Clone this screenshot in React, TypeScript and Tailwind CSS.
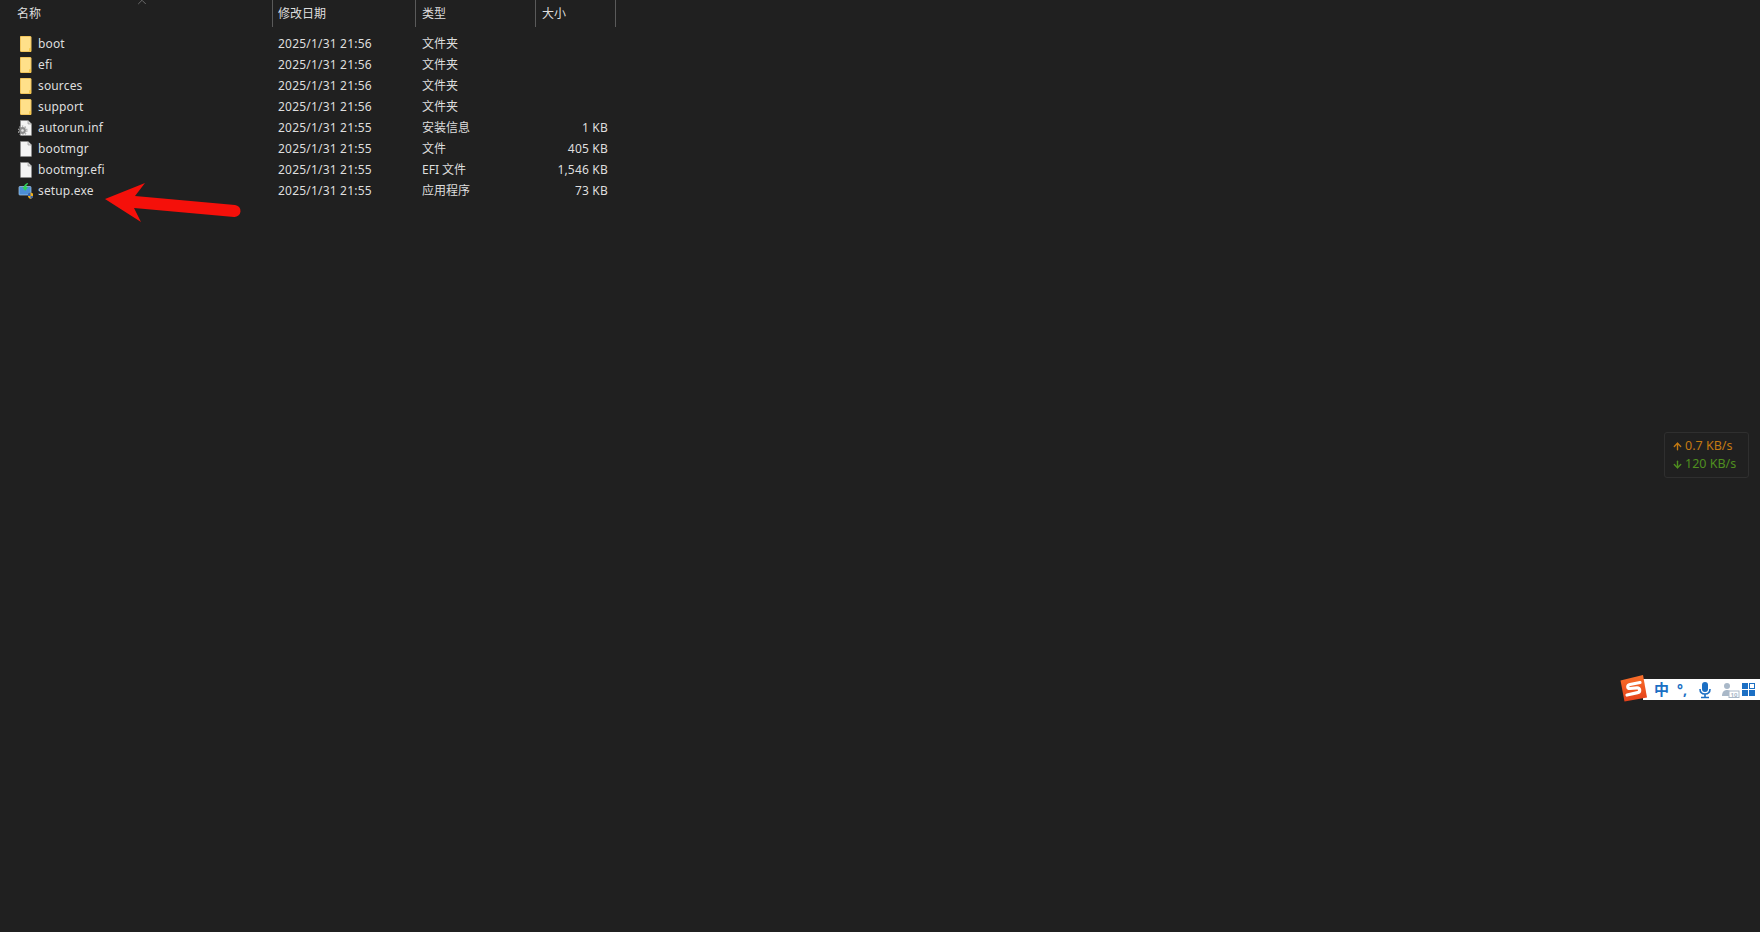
import { ArrowDown, ArrowUp, ChevronUp } from 'lucide-react';

type Row = {
  name: string;
  date: string;
  type: string;
  size?: string;
  icon: 'folder' | 'inf' | 'file' | 'exe';
};

const rows: Row[] = [
  { name: 'boot', date: '2025/1/31 21:56', type: '文件夹', icon: 'folder' },
  { name: 'efi', date: '2025/1/31 21:56', type: '文件夹', icon: 'folder' },
  { name: 'sources', date: '2025/1/31 21:56', type: '文件夹', icon: 'folder' },
  { name: 'support', date: '2025/1/31 21:56', type: '文件夹', icon: 'folder' },
  { name: 'autorun.inf', date: '2025/1/31 21:55', type: '安装信息', size: '1 KB', icon: 'inf' },
  { name: 'bootmgr', date: '2025/1/31 21:55', type: '文件', size: '405 KB', icon: 'file' },
  { name: 'bootmgr.efi', date: '2025/1/31 21:55', type: 'EFI 文件', size: '1,546 KB', icon: 'file' },
  { name: 'setup.exe', date: '2025/1/31 21:55', type: '应用程序', size: '73 KB', icon: 'exe' },
];

function FileIcon({ icon }: { icon: Row['icon'] }) {
  if (icon === 'folder') {
    return (
      <svg width="16" height="16" viewBox="0 0 16 16" className="shrink-0">
        <path d="M2.500 .5h10a.5.5 0 0 1 .5.5V15.500H3a.5.5 0 0 1-.5-.5z" fill="#ffe08a" stroke="#f2c55c" />
        <path d="M11 15.500v-3l2-1v4z" fill="#f5c94f" />
      </svg>
    );
  }
  if (icon === 'file' || icon === 'inf') {
    return (
      <svg width="16" height="16" viewBox="0 0 16 16" className="shrink-0">
        <path d="M2.500 .5h7.500l3.500 3.500V15a.5.5 0 0 1-.5.5H3a.5.5 0 0 1-.5-.5z" fill="#f4f4f4" stroke="#8f8f8f" strokeWidth="0.6" />
        <path d="M10 .5V4h3.500" fill="#d8d8d8" stroke="#8f8f8f" strokeWidth="0.6" />
        {icon === 'inf' && (
          <g>
            <circle cx="4.500" cy="10.500" r="3.400" fill="#8d8d8d" />
            <circle cx="4.500" cy="10.500" r="4.400" fill="none" stroke="#a8a8a8" strokeWidth="1.200" strokeDasharray="1.400 1.400" />
            <circle cx="4.500" cy="10.500" r="1.300" fill="#e8e8e8" />
          </g>
        )}
      </svg>
    );
  }
  return (
    <svg width="16" height="16" viewBox="0 0 16 16" className="shrink-0">
      <rect x="1" y="3.500" width="12" height="8.500" rx="0.8" fill="#4c8fd6" stroke="#a8cdee" strokeWidth="0.7" />
      <path d="M10 0C7.500.4 6 2 6 4H4.300L7.200 8 10 4H8.200C8.200 2.800 9 1.600 10 1z" fill="#2fd05a" />
      <path d="M10 10.500l2.500-1 2.500 1v2.500c0 1.300-1.200 2.300-2.500 3-1.300-.7-2.500-1.700-2.500-3z" fill="#f3b21c" />
      <path d="M12.500 9.500V13H10v-2.500zM12.500 13H15c0 1.300-1.200 2.300-2.500 3z" fill="#2f62b8" />
    </svg>
  );
}

export default function App() {
  return (
    <div
      className="relative h-[932px] w-full overflow-hidden bg-[#202020] text-[12px] text-[#dedede]"
      style={{ fontFamily: '"Noto Sans", "Noto Sans CJK SC", sans-serif' }}
    >
      {/* 表头 */}
      <div className="relative flex h-[27px] leading-[27px]">
        <div className="w-[273px] border-r border-[#5a5a5a] pl-[17px]">名称</div>
        <div className="w-[143px] border-r border-[#5a5a5a] pl-[5px]">修改日期</div>
        <div className="w-[120px] border-r border-[#5a5a5a] pl-[6px]">类型</div>
        <div className="w-[80px] border-r border-[#5a5a5a] pl-[6px]">大小</div>
        <ChevronUp size={14} strokeWidth={1} className="absolute left-[135px] top-[-5px] text-[#a0a0a0]" />
      </div>

      {/* 文件列表 */}
      <div className="mt-[6px] flex flex-col">
        {rows.map((row) => (
          <div key={row.name} className="flex h-[21px] items-center">
            <div className="flex w-[272px] items-center gap-[4px] pl-[18px]">
              <FileIcon icon={row.icon} />
              <span className="tracking-[0.15px]">{row.name}</span>
            </div>
            <div className="w-[144px] pl-[6px] tracking-[0.2px]">{row.date}</div>
            <div className="w-[120px] pl-[6px]">{row.type}</div>
            <div className="w-[72px] text-right tracking-[0.2px]">{row.size}</div>
          </div>
        ))}
      </div>

      {/* 红色箭头 */}
      <svg width="142" height="50" viewBox="0 0 142 50" className="absolute left-[103px] top-[180px]">
        <path d="M2 19 42 3 32 16 132 25a6 6 0 0 1-1 12L31 28 38 42z" fill="#f5100a" />
      </svg>

      {/* 网速悬浮窗 */}
      <div className="absolute left-[1664px] top-[432px] flex h-[46px] w-[85px] flex-col justify-center rounded-[3px] border border-[#2f2f2f] pl-[7px] text-[12.5px] leading-[18px]">
        <div className="flex items-center gap-[2px] text-[#c47a12]">
          <ArrowUp size={11} strokeWidth={3} />
          <span>0.7 KB/s</span>
        </div>
        <div className="flex items-center gap-[2px] text-[#4f8f1f]">
          <ArrowDown size={11} strokeWidth={3} />
          <span>120 KB/s</span>
        </div>
      </div>

      {/* 输入法状态栏 */}
      <div className="absolute left-[1643px] top-[679px] flex h-[21px] w-[117px] items-center bg-white text-[#1b6fc4]">
        <span className="ml-[11px] w-[20px] text-[15px] font-bold leading-none">中</span>
        <span className="ml-[3px] w-[20px] text-[14px] font-bold leading-none">°,</span>
        <svg width="16" height="18" viewBox="0 0 16 18">
          <rect x="5" y="1" width="6" height="10" rx="3" fill="#1b6fc4" />
          <path d="M3 8c0 3 2 5 5 5s5-2 5-5M8 13v3M4 16.500h8" fill="none" stroke="#1b6fc4" strokeWidth="1.600" />
        </svg>
        <svg width="20" height="18" viewBox="0 0 20 18" className="ml-[7px]">
          <circle cx="7" cy="5" r="3" fill="#a9b8c8" />
          <path d="M2 15c0-4 2-6 5-6s5 2 5 6z" fill="#a9b8c8" />
          <rect x="9" y="10" width="10" height="6.500" fill="#fff" stroke="#a9b8c8" />
          <text x="10.500" y="15.500" fontSize="6" fontWeight="700" fill="#a9b8c8">10</text>
        </svg>
        <div className="ml-[2px] grid grid-cols-2 gap-[1px]">
          <div className="size-[6px] bg-[#1b6fc4]" />
          <div className="size-[6px] border border-[#1b6fc4]" />
          <div className="size-[6px] bg-[#1b6fc4]" />
          <div className="size-[6px] bg-[#1b6fc4]" />
        </div>
      </div>
      <svg width="30" height="30" viewBox="0 0 30 30" className="absolute left-[1619px] top-[674px]">
        <defs>
          <linearGradient id="sogou" x1="0" y1="0" x2="0" y2="1">
            <stop offset="0" stopColor="#f9702a" />
            <stop offset="1" stopColor="#e5401a" />
          </linearGradient>
        </defs>
        <path d="M1.500 6.500 24 1l4 22.500-22.500 4z" fill="url(#sogou)" />
        <path d="M21 8.500 11 10.500c-3 .6-3 4 0 4l7-.6c3.500-.2 3.500 4.200 .5 4.700L8 21" fill="none" stroke="#fff" strokeWidth="3.200" strokeLinecap="round" />
      </svg>
    </div>
  );
}
